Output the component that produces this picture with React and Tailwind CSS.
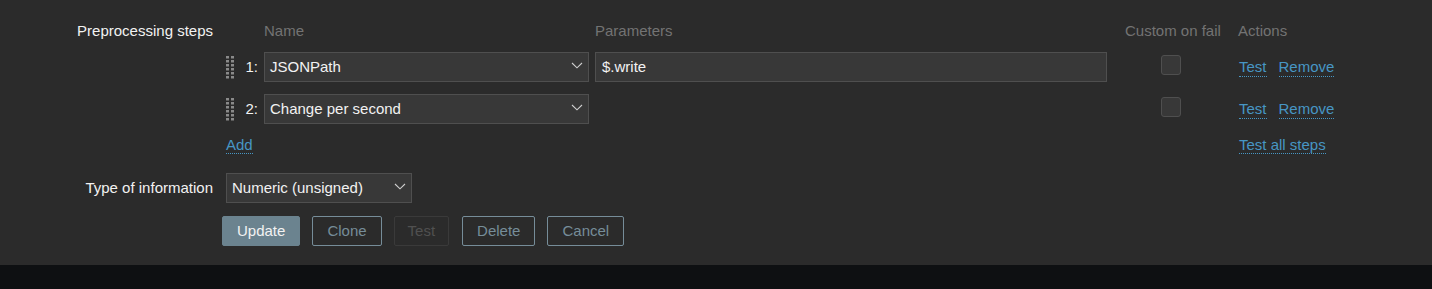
const steps = [
  { n: 1, name: 'JSONPath', param: '$.write' },
  { n: 2, name: 'Change per second', param: null },
];

function Chevron() {
  return (
    <svg width="12" height="7" viewBox="0 0 12 7" className="mb-[4px] shrink-0">
      <polyline points="1,1 6,5.8 11,1" fill="none" stroke="#cfcfcf" strokeWidth="1.1" />
    </svg>
  );
}

function Handle() {
  const dots = [];
  for (let r = 0; r < 6; r++) {
    for (let c = 0; c < 2; c++) {
      dots.push(<rect key={`${r}-${c}`} x={c * 5} y={r * 4} width="3" height="2.5" fill="#8a8a8a" />);
    }
  }
  return (
    <svg width="8" height="23" viewBox="0 0 8 23" className="ml-px">
      {dots}
    </svg>
  );
}

function FakeSelect({ value, className }) {
  return (
    <div className={`flex h-[30px] items-center justify-between border border-[#4f4f4f] bg-[#383838] pl-[5px] pr-[5px] text-[#f2f2f2] ${className}`}>
      <span>{value}</span>
      <Chevron />
    </div>
  );
}

function Link({ children, className = '' }) {
  return (
    <span className={`border-b border-dotted border-[#4796c4] text-[#4796c4] ${className}`}>{children}</span>
  );
}

export default function App() {
  return (
    <div className="h-[289px] w-[1432px] bg-[#0e1012] font-['Liberation_Sans',Arial,sans-serif] text-[15px] leading-[18px]">
      <div className="h-[265px] bg-[#2b2b2b] pt-[22px]">
        <div className="flex">
          <div className="w-[213px] text-right text-[#f2f2f2]">Preprocessing steps</div>
          <div className="ml-[12px] flex flex-col">
            <div className="flex h-[18px] text-[#737373]">
              <div className="w-[39px]" />
              <div className="w-[325px]">Name</div>
              <div className="ml-[6px] w-[512px]">Parameters</div>
              <div className="w-[131px] pl-[18px]">Custom on fail</div>
              <div>Actions</div>
            </div>

            {steps.map((s) => (
              <div key={s.n} className="mt-[12px] flex h-[30px] items-center">
                <div className="w-[18px]">
                  <Handle />
                </div>
                <div className="w-[21px] pr-[6px] text-right text-[#f2f2f2]">{s.n}:</div>
                <FakeSelect value={s.name} className="w-[325px]" />
                <div className="ml-[6px] w-[512px]">
                  {s.param !== null && (
                    <div className="flex h-[30px] items-center border border-[#4f4f4f] bg-[#383838] px-[6px] text-[#f2f2f2]">
                      {s.param}
                    </div>
                  )}
                </div>
                <div className="w-[131px] pl-[54px]">
                  <div className="mb-[4px] h-[20px] w-[20px] rounded-[3px] border border-[#4f4f4f] bg-[#383838]" />
                </div>
                <div className="flex gap-[12px] pl-px">
                  <Link>Test</Link>
                  <Link>Remove</Link>
                </div>
              </div>
            ))}

            <div className="mt-[12px] flex h-[18px]">
              <div className="w-[1013px] pl-px">
                <Link>Add</Link>
              </div>
              <div className="pl-px">
                <Link>Test all steps</Link>
              </div>
            </div>
          </div>
        </div>

        <div className="mt-[19px] flex items-center">
          <div className="w-[213px] text-right text-[#f2f2f2]">Type of information</div>
          <FakeSelect value="Numeric (unsigned)" className="ml-[13px] w-[186px]" />
        </div>

        <div className="ml-[222px] mt-[13px] flex gap-[12px]">
          <button className="h-[30px] rounded-[2px] border border-[#6b838f] bg-[#6b838f] px-[14px] text-[#f2f2f2]">Update</button>
          <button className="h-[30px] rounded-[2px] border border-[#768d99] px-[14px] text-[#768d99]">Clone</button>
          <button className="h-[30px] rounded-[2px] border border-[#3a3a3a] px-[13px] text-[#505050]">Test</button>
          <button className="ml-px h-[30px] rounded-[2px] border border-[#768d99] px-[14px] text-[#768d99]">Delete</button>
          <button className="h-[30px] rounded-[2px] border border-[#768d99] px-[14px] text-[#768d99]">Cancel</button>
        </div>
      </div>
    </div>
  );
}
